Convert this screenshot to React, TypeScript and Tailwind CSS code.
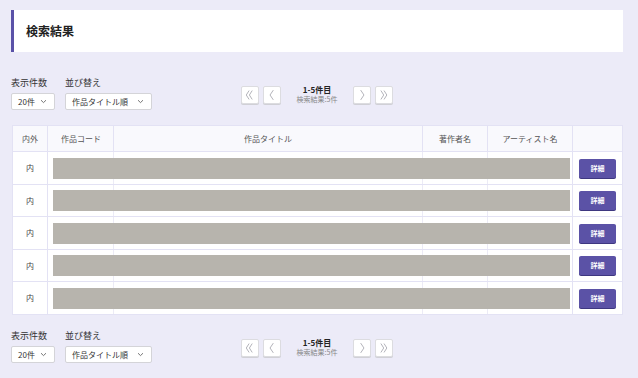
const rows = ['内', '内', '内', '内', '内']

const cols = 'grid grid-cols-[35px_66px_309px_65px_85px_49px]'

function Chevron() {
  return (
    <svg width="7" height="5" viewBox="0 0 7 5" className="text-[#666]">
      <path d="M1 1.2 L3.5 3.6 L6 1.2" fill="none" stroke="currentColor" strokeWidth="0.9" />
    </svg>
  )
}

function Select({ label, width }: { label: string; width: string }) {
  return (
    <div
      className={`${width} h-[17px] flex items-center justify-between pl-[6px] pr-[7px] bg-white border border-[#d4d4d8] rounded-[2px] text-[8px] text-[#333]`}
    >
      <span>{label}</span>
      <Chevron />
    </div>
  )
}

function PageBtn({ dir, dbl }: { dir: 'l' | 'r'; dbl?: boolean }) {
  return (
    <div className="w-[18px] h-[18px] bg-white border border-[#dcdce0] rounded-[2px] shadow-[0_1px_0_#d0d0d6] flex items-center justify-center">
      <svg width="16" height="16" viewBox="0 0 16 18" className="text-[#a0a0a8]">
        {dbl ? (
          <>
            <path d={dir === 'l' ? 'M7 4 L3.8 9 L7 14' : 'M4.5 4 L7.7 9 L4.5 14'} fill="none" stroke="currentColor" strokeWidth="0.9" />
            <path d={dir === 'l' ? 'M10.5 4 L7.3 9 L10.5 14' : 'M8 4 L11.2 9 L8 14'} fill="none" stroke="currentColor" strokeWidth="0.9" />
          </>
        ) : (
          <path d={dir === 'l' ? 'M9.5 3.5 L5.8 9 L9.5 14.5' : 'M6.5 3.5 L10.2 9 L6.5 14.5'} fill="none" stroke="currentColor" strokeWidth="0.9" />
        )}
      </svg>
    </div>
  )
}

function Controls() {
  return (
    <div className="grid grid-cols-[1fr_auto_1fr] items-end">
      <div className="flex gap-[10px]">
        <div className="flex flex-col gap-[5px]">
          <span className="text-[9px] leading-[11px] text-[#333]">表示件数</span>
          <Select label="20件" width="w-[44px]" />
        </div>
        <div className="flex flex-col gap-[5px]">
          <span className="text-[9px] leading-[11px] text-[#333]">並び替え</span>
          <Select label="作品タイトル順" width="w-[87px]" />
        </div>
      </div>
      <div className="flex items-center gap-[4px] mb-[6px]">
        <PageBtn dir="l" dbl />
        <PageBtn dir="l" />
        <div className="w-[64px] flex flex-col items-center">
          <span className="text-[8px] leading-[10px] font-bold text-[#222]">1-5件目</span>
          <span className="text-[7px] leading-[9px] text-[#888]">検索結果:5件</span>
        </div>
        <PageBtn dir="r" />
        <PageBtn dir="r" dbl />
      </div>
      <div />
    </div>
  )
}

export default function App() {
  return (
    <div
      className="w-[638px] h-[378px] bg-[#ecebf8] pt-[10px] pl-[11px] pr-[15px] overflow-hidden"
      style={{ fontFamily: '"Noto Sans CJK JP", "Noto Sans", sans-serif' }}
    >
      <div className="h-[42px] bg-white border-l-[3px] border-[#5a52a8] flex items-center pl-[12px]">
        <h1 className="text-[12px] font-bold text-[#222]">検索結果</h1>
      </div>

      <div className="mt-[25px]">
        <Controls />
      </div>

      <div className="mt-[15px] ml-[1px] border border-[#e3e2f4] bg-white">
        <div className={`${cols} h-[25px] bg-[#f9f9fd] text-[8px] text-[#555]`}>
          <div className="flex items-center justify-center border-r border-[#e3e2f4]">内外</div>
          <div className="flex items-center pl-[13px] border-r border-[#e3e2f4]">作品コード</div>
          <div className="flex items-center justify-center border-r border-[#e3e2f4]">作品タイトル</div>
          <div className="flex items-center justify-center border-r border-[#e3e2f4]">著作者名</div>
          <div className="flex items-center justify-center border-r border-[#e3e2f4]">アーティスト名</div>
          <div />
        </div>
        {rows.map((r, i) => (
          <div key={i} className={`${cols} ${i % 2 === 0 ? 'h-[33px]' : 'h-[32px]'} border-t border-[#e3e2f4]`}>
            <div className="row-start-1 col-start-1 flex items-center justify-center border-r border-[#e3e2f4] text-[8px] text-[#444]">
              {r}
            </div>
            <div className="row-start-1 col-start-2 border-r border-[#ecebf6]" />
            <div className="row-start-1 col-start-3 border-r border-[#ecebf6]" />
            <div className="row-start-1 col-start-4 border-r border-[#ecebf6]" />
            <div className="row-start-1 col-start-5 border-r border-[#e3e2f4]" />
            <div className="row-start-1 col-start-2 col-end-6 self-center ml-[5px] mr-[3px] h-[21px] bg-[#b7b4ad]" />
            <div className="row-start-1 col-start-6 flex items-center justify-center">
              <button className="w-[37px] h-[19px] bg-[#5b52a6] rounded-[2px] shadow-[0_1px_0_#3e3780] text-white text-[7px] font-bold">
                詳細
              </button>
            </div>
          </div>
        ))}
      </div>

      <div className="mt-[15px]">
        <Controls />
      </div>
    </div>
  )
}
